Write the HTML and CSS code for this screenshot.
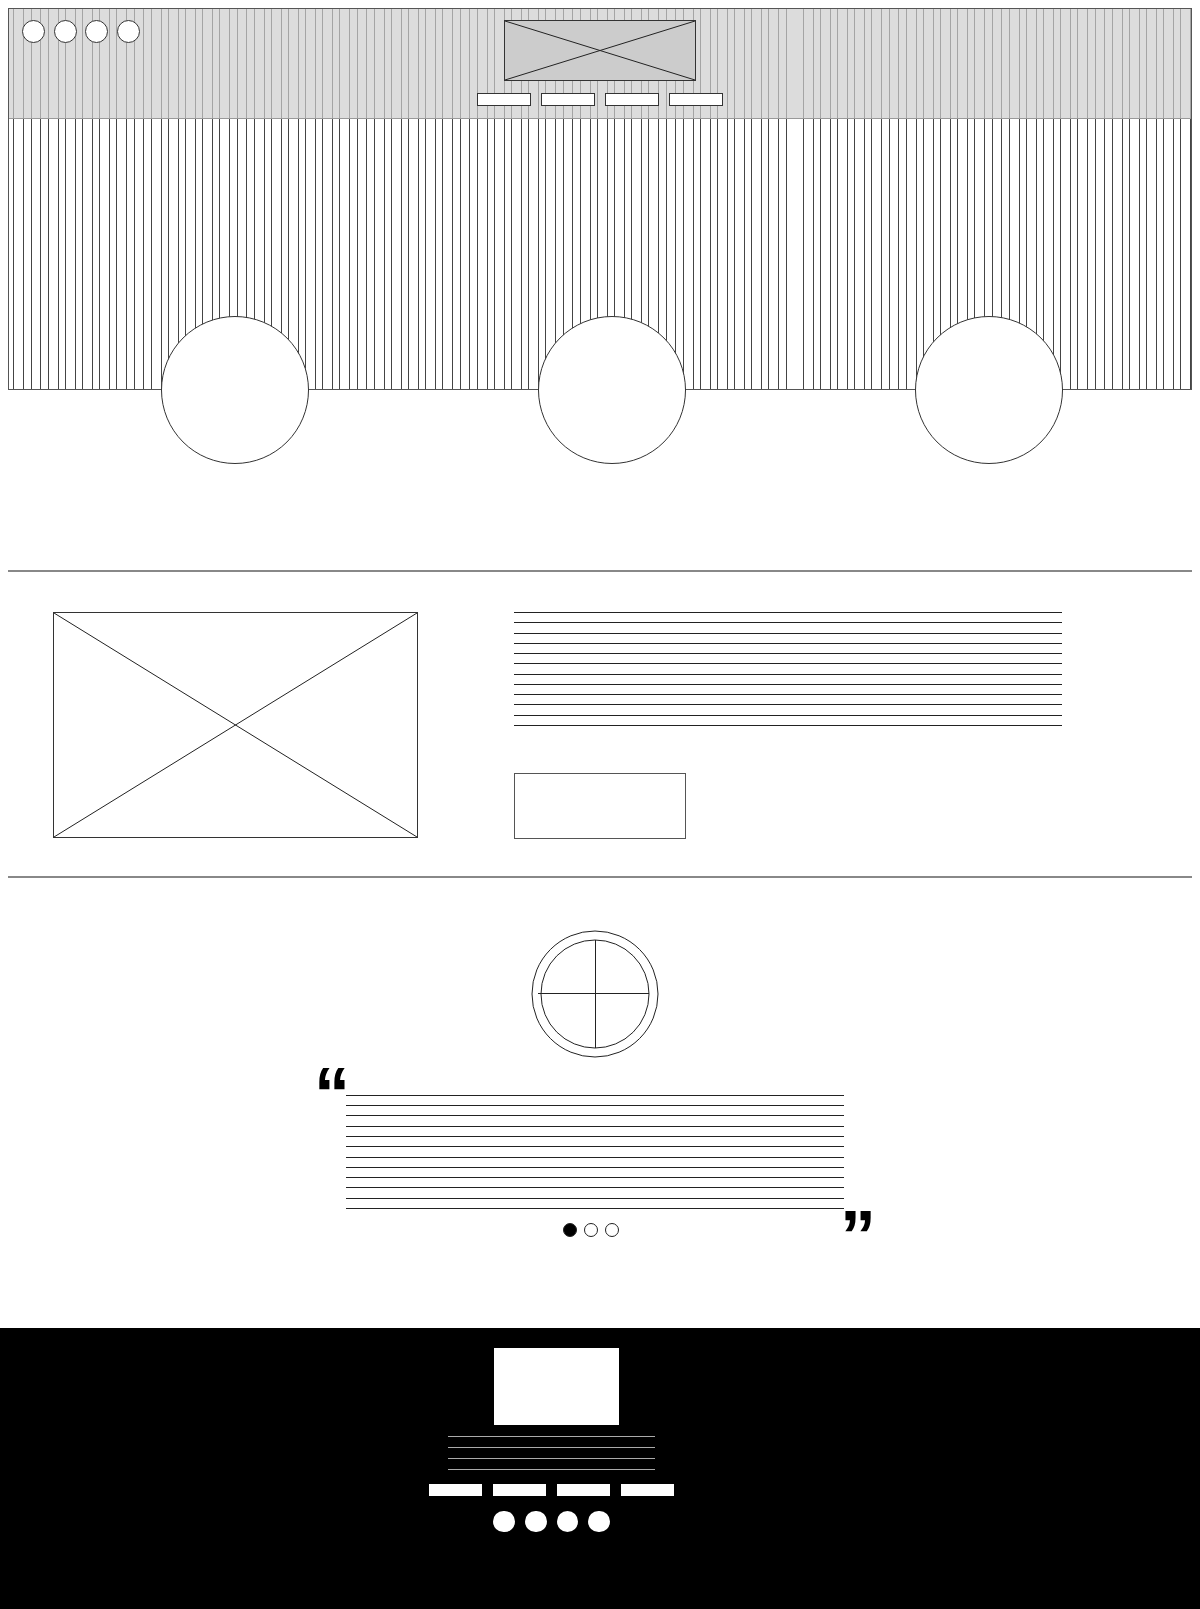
FILE: index.html
```html
<!DOCTYPE html>
<html lang="en">
<head>
    <meta charset="UTF-8">
    <meta name="viewport" content="width=device-width, initial-scale=1.0">
    <title>Landing wireframe</title>
    <link rel="stylesheet" href="styles.css">
</head>
<body>
<div class="page">
    <div class="hero">
        <div class="hero-header">
            <div class="social">
                <span class="social-dot"></span>
                <span class="social-dot"></span>
                <span class="social-dot"></span>
                <span class="social-dot"></span>
            </div>
            <div class="brand">
                <div class="logo">
                    <svg class="cross" viewBox="0 0 100 100" preserveAspectRatio="none">
                        <line x1="0" y1="0" x2="100" y2="100"/>
                        <line x1="100" y1="0" x2="0" y2="100"/>
                    </svg>
                </div>
                <div class="nav">
                    <span class="nav-item"></span>
                    <span class="nav-item"></span>
                    <span class="nav-item"></span>
                    <span class="nav-item"></span>
                </div>
            </div>
            <div></div>
        </div>
    </div>

    <div class="features">
        <div class="feature"></div>
        <div class="feature"></div>
        <div class="feature"></div>
    </div>

    <hr class="divider">

    <div class="about">
        <div class="about-image">
            <svg class="cross" viewBox="0 0 100 100" preserveAspectRatio="none">
                <line x1="0" y1="0" x2="100" y2="100"/>
                <line x1="100" y1="0" x2="0" y2="100"/>
            </svg>
        </div>
        <div class="about-text">
            <div class="lines about-lines">
                <span class="line"></span><span class="line"></span><span class="line"></span>
                <span class="line"></span><span class="line"></span><span class="line"></span>
                <span class="line"></span><span class="line"></span><span class="line"></span>
                <span class="line"></span><span class="line"></span><span class="line"></span>
            </div>
            <div class="about-button"></div>
        </div>
    </div>

    <hr class="divider">

    <div class="testimonial">
        <svg class="avatar" width="128" height="128" viewBox="0 0 128 128">
            <circle cx="64" cy="64" r="63"/>
            <circle cx="64" cy="64" r="54"/>
            <line x1="64.5" y1="10" x2="64.5" y2="118"/>
            <line x1="7" y1="63.5" x2="118" y2="63.5"/>
        </svg>
        <div class="quote">
            <span class="quote-mark quote-open">“</span>
            <div class="lines quote-lines">
                <span class="line"></span><span class="line"></span><span class="line"></span>
                <span class="line"></span><span class="line"></span><span class="line"></span>
                <span class="line"></span><span class="line"></span><span class="line"></span>
                <span class="line"></span><span class="line"></span><span class="line"></span>
            </div>
            <div class="slider-dots">
                <span class="slider-dot active"></span>
                <span class="slider-dot"></span>
                <span class="slider-dot"></span>
            </div>
            <span class="quote-mark quote-close">”</span>
        </div>
    </div>
</div>

<footer class="footer">
    <div class="footer-inner">
        <div class="footer-logo"></div>
        <div class="lines footer-lines">
            <span class="line"></span><span class="line"></span>
            <span class="line"></span><span class="line"></span>
        </div>
        <div class="footer-nav">
            <span class="footer-nav-item"></span>
            <span class="footer-nav-item"></span>
            <span class="footer-nav-item"></span>
            <span class="footer-nav-item"></span>
        </div>
        <div class="footer-social">
            <span class="footer-dot"></span>
            <span class="footer-dot"></span>
            <span class="footer-dot"></span>
            <span class="footer-dot"></span>
        </div>
    </div>
</footer>
</body>
</html>
```

FILE: styles.css
```css
body {
    margin: 0;
    background-color: #fff;
    font-family: "Liberation Sans", Arial, sans-serif;
}

.page {
    padding: 8px 8px 0;
}

/* hero with striped background */
.hero {
    height: 380px;
    border: 1px solid #555;
    background-color: #fff;
    background-image: repeating-linear-gradient(90deg,
        transparent 0 4.44px,
        #444 4.44px 5.44px,
        transparent 5.44px 14.3px,
        #444 14.3px 15.3px,
        transparent 15.3px 17.16px);
}

.hero-header {
    height: 109px;
    border-bottom: 1px solid #999;
    background-color: rgba(205, 205, 205, 0.7);
    display: grid;
    grid-template-columns: 1fr auto 1fr;
}

.social {
    display: flex;
    align-items: flex-start;
    gap: 8.7px;
    padding: 11px 0 0 13px;
}

.social-dot {
    width: 21px;
    height: 21px;
    border: 1px solid #333;
    border-radius: 50%;
    background-color: #fff;
}

.brand {
    display: flex;
    flex-direction: column;
    align-items: center;
    padding-top: 11px;
}

.logo {
    width: 190px;
    height: 59px;
    border: 1px solid #333;
    background-color: #ccc;
}

.cross {
    display: block;
    width: 100%;
    height: 100%;
}

.cross line {
    stroke: #222;
    stroke-width: 1;
    vector-effect: non-scaling-stroke;
}

.nav {
    display: flex;
    gap: 9.7px;
    margin-top: 12px;
}

.nav-item {
    width: 52px;
    height: 11px;
    border: 1px solid #333;
    background-color: #fff;
}

/* circles over the hero edge */
.features {
    display: flex;
    gap: 229px;
    padding-left: 153px;
    margin-top: -74px;
    margin-bottom: 106px;
}

.feature {
    width: 146px;
    height: 146px;
    border: 1px solid #333;
    border-radius: 50%;
    background-color: #fff;
}

.divider {
    margin: 0;
    height: 0;
    border: 0;
    border-top: 2px solid #888;
}

/* about block */
.about {
    display: flex;
    align-items: flex-start;
    padding: 40px 0 37px 45px;
}

.about-image {
    width: 363px;
    height: 224px;
    border: 1px solid #333;
}

.about-text {
    margin-left: 96px;
}

.lines {
    display: flex;
    flex-direction: column;
    gap: 9.27px;
}

.line {
    height: 1px;
    background-color: #222;
}

.about-lines {
    width: 548px;
}

.about-button {
    width: 170px;
    height: 64px;
    border: 1px solid #555;
    margin-top: 47px;
}

/* testimonial */
.testimonial {
    display: flex;
    flex-direction: column;
    align-items: center;
    padding: 52px 10px 0 0;
}

.avatar {
    display: block;
}

.avatar circle,
.avatar line {
    fill: none;
    stroke: #222;
    stroke-width: 1;
}

.quote {
    display: grid;
    grid-template-columns: 28px 498px 28px;
    grid-template-rows: 37px auto auto;
}

.quote-mark {
    font-family: "Liberation Sans", Arial, sans-serif;
    font-weight: bold;
    font-size: 72px;
    line-height: 71px;
    height: 28px;
    color: #000;
}

.quote-open {
    grid-column: 1;
    grid-row: 1;
    margin-left: -4px;
}

.quote-lines {
    grid-column: 2;
    grid-row: 2;
}

.slider-dots {
    grid-column: 2;
    grid-row: 3;
    display: flex;
    justify-content: center;
    gap: 7px;
    padding: 14.5px 9px 0 0;
}

.slider-dot {
    width: 12px;
    height: 12px;
    border: 1px solid #222;
    border-radius: 50%;
}

.slider-dot.active {
    background-color: #000;
}

.quote-close {
    grid-column: 3;
    grid-row: 3;
    margin: -8px 0 0 -4px;
}

/* footer */
.footer {
    margin-top: 90.5px;
    height: 282px;
    background-color: #000;
}

.footer-inner {
    width: 1103px;
    display: flex;
    flex-direction: column;
    align-items: center;
    padding-top: 20px;
}

.footer-logo {
    width: 125px;
    height: 77px;
    margin-left: 9px;
    background-color: #fff;
}

.footer-lines {
    width: 207px;
    gap: 10px;
    margin-top: 11.5px;
}

.footer-lines .line {
    background-color: #aaa;
}

.footer-nav {
    display: flex;
    gap: 11px;
    margin-top: 14px;
}

.footer-nav-item {
    width: 53px;
    height: 11.3px;
    background-color: #fff;
}

.footer-social {
    display: flex;
    gap: 10px;
    margin-top: 15px;
}

.footer-dot {
    width: 21.7px;
    height: 21.7px;
    border-radius: 50%;
    background-color: #fff;
}
```
